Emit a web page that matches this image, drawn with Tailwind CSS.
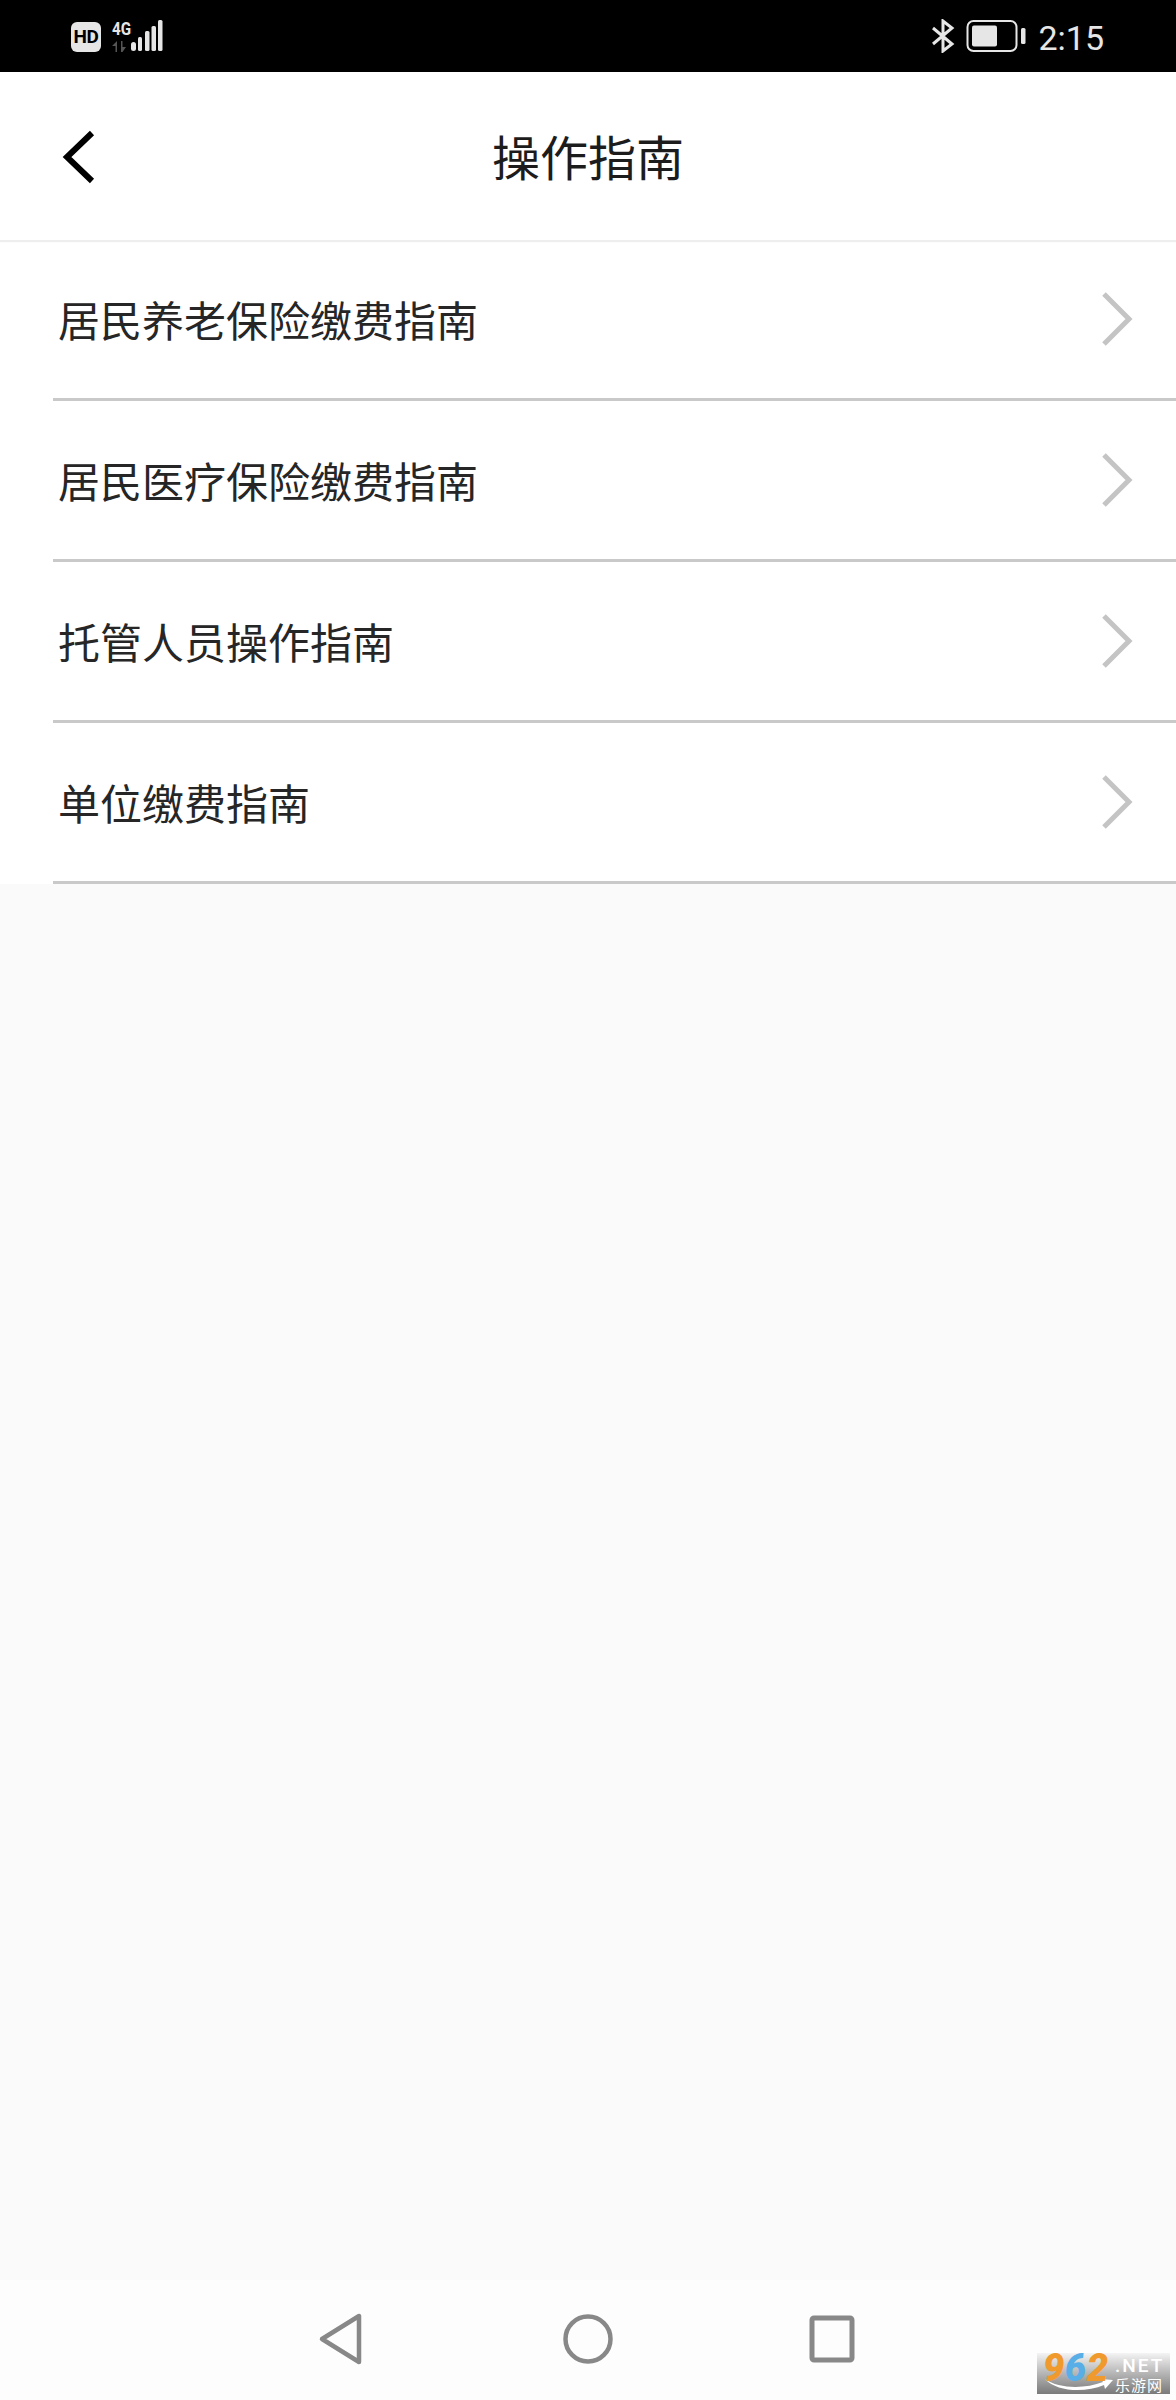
<!DOCTYPE html>
<html lang="zh-CN">
<head>
  <meta charset="UTF-8">
  <meta name="viewport" content="width=device-width, initial-scale=1.0">
  <title>操作指南</title>
  <script src="https://cdn.jsdelivr.net/npm/@tailwindcss/browser@4"></script>
</head>
<body class="bg-[#fafafa] font-['Noto_Sans_CJK_SC',sans-serif] antialiased">
  <div class="relative w-[1176px] h-[2400px] flex flex-col overflow-hidden">

    <!-- status bar -->
    <div class="h-[72px] shrink-0 bg-black flex items-center pl-[71px] pr-[72px] text-[#e6e6e6]">
      <div class="w-[30px] h-[30px] rounded-[6px] bg-[#e6e6e6] flex items-center justify-center text-black font-['Roboto',sans-serif] font-bold text-[19px] leading-none tracking-[-0.5px] mt-[1px]">HD</div>
      <div class="ml-[11px] w-[18px] h-[32px] flex flex-col mt-[-1px]">
        <span class="font-['Roboto',sans-serif] font-bold text-[19px] leading-[17px] origin-left scale-x-[0.8] whitespace-nowrap">4G</span>
        <svg class="mt-[4px]" width="18" height="11" viewBox="0 0 18 11" fill="#555"><path d="M5 0v11H3.500V5H0zM9 0h1.500v6H14L10.500 11H9z"/></svg>
      </div>
      <svg class="ml-[1px] mt-[-1px]" width="32" height="32" viewBox="0 0 32 32" fill="#e6e6e6">
        <rect x="0" y="22" width="5" height="9" rx="2.500"/>
        <rect x="7" y="17" width="4" height="14" rx="1.500"/>
        <rect x="14" y="11" width="4.500" height="20" rx="1.500"/>
        <rect x="20.500" y="6" width="4.500" height="25" rx="1.500"/>
        <rect x="27" y="0" width="4.500" height="31" rx="1.500"/>
      </svg>
      <svg class="ml-auto" width="24" height="34" viewBox="0 0 24 34" fill="none" stroke="#e6e6e6" stroke-width="3">
        <path d="M2 9l19 16-9 7V2l9 7L2 25"/>
      </svg>
      <svg class="ml-[11px]" width="62" height="34" viewBox="0 0 62 34" fill="none">
        <rect x="1.500" y="2" width="49" height="30" rx="6" stroke="#e6e6e6" stroke-width="2"/>
        <rect x="6" y="6.500" width="25" height="21" rx="2" fill="#e6e6e6"/>
        <rect x="55" y="9" width="4.500" height="16" rx="1.500" fill="#e6e6e6"/>
      </svg>
      <span class="ml-[10px] mt-[3px] font-['Roboto',sans-serif] font-normal text-[34px] leading-none">2:15</span>
    </div>

    <!-- header -->
    <div class="relative z-10 h-[168px] shrink-0 bg-white flex items-center justify-center shadow-[0_2px_1px_#eeeeee]">
      <button class="absolute left-[60px] top-[56px]">
        <svg width="38" height="58" viewBox="0 0 38 58" fill="none" stroke="#000" stroke-width="6"><path d="M32 5L7 29l25 24"/></svg>
      </button>
      <h1 class="text-[48px] leading-none font-normal text-[#1c1c1c] mt-[-2px]">操作指南</h1>
    </div>

    <!-- list -->
    <ul class="shrink-0">
      <li class="h-[161px] bg-white pl-[53px]">
        <div class="h-full flex items-center justify-between border-b-[3px] border-[#c9c9c9] pl-[5px] pr-[42px]">
          <span class="text-[42px] leading-none text-[#262626]">居民养老保险缴费指南</span>
          <svg width="34" height="58" viewBox="0 0 34 58" fill="none" stroke="#c4c4c4" stroke-width="5"><path d="M4 4l25 25L4 54"/></svg>
        </div>
      </li>
      <li class="h-[161px] bg-white pl-[53px]">
        <div class="h-full flex items-center justify-between border-b-[3px] border-[#c9c9c9] pl-[5px] pr-[42px]">
          <span class="text-[42px] leading-none text-[#262626]">居民医疗保险缴费指南</span>
          <svg width="34" height="58" viewBox="0 0 34 58" fill="none" stroke="#c4c4c4" stroke-width="5"><path d="M4 4l25 25L4 54"/></svg>
        </div>
      </li>
      <li class="h-[161px] bg-white pl-[53px]">
        <div class="h-full flex items-center justify-between border-b-[3px] border-[#c9c9c9] pl-[5px] pr-[42px]">
          <span class="text-[42px] leading-none text-[#262626]">托管人员操作指南</span>
          <svg width="34" height="58" viewBox="0 0 34 58" fill="none" stroke="#c4c4c4" stroke-width="5"><path d="M4 4l25 25L4 54"/></svg>
        </div>
      </li>
      <li class="h-[161px] bg-white pl-[53px]">
        <div class="h-full flex items-center justify-between border-b-[3px] border-[#c9c9c9] pl-[5px] pr-[42px]">
          <span class="text-[42px] leading-none text-[#262626]">单位缴费指南</span>
          <svg width="34" height="58" viewBox="0 0 34 58" fill="none" stroke="#c4c4c4" stroke-width="5"><path d="M4 4l25 25L4 54"/></svg>
        </div>
      </li>
    </ul>

    <div class="flex-1 bg-[#fafafa]"></div>

    <!-- system nav -->
    <div class="h-[120px] shrink-0 bg-[#fdfdfd] flex items-start justify-center pt-[32px] pr-[3px]">
      <svg width="46" height="54" viewBox="0 0 46 54" fill="none" stroke="#888" stroke-width="4.500" stroke-linejoin="round"><path d="M41 4v46L4 27z"/></svg>
      <svg class="ml-[199px] mr-[196px]" width="50" height="54" viewBox="0 0 50 54" fill="none" stroke="#888" stroke-width="4.500"><circle cx="25" cy="27" r="22.500"/></svg>
      <svg width="46" height="54" viewBox="0 0 46 54" fill="none" stroke="#888" stroke-width="5"><rect x="3" y="6" width="40" height="42" rx="2"/></svg>
    </div>

    <!-- watermark -->
    <div class="absolute left-[1037px] top-[2353px] w-[133px] h-[41px] bg-gradient-to-b from-[#f4f4f4] to-[#7a7a7a]">
      <svg class="absolute left-[8px] top-[24px]" width="70" height="17" viewBox="0 0 70 17" fill="#fff"><path d="M0 2c14 10 40 10 58 3l-2-3 12 1-8 9-1-4C40 16 12 15 0 2z"/></svg>
      <span class="absolute left-[6px] top-0 italic font-['Roboto',sans-serif] font-black text-[38px] leading-[30px] tracking-[0.5px]"><span class="text-[#f09a2e]">9</span><span class="text-[#58aee6]">6</span><span class="text-[#f09a2e]">2</span></span>
      <span class="absolute left-[78px] top-[3px] font-['Roboto',sans-serif] font-medium text-[19px] leading-[19px] tracking-[2px] text-white">.NET</span>
      <span class="absolute left-[78px] top-[24px] text-[15px] leading-[16px] tracking-[1px] text-white">乐游网</span>
    </div>
  </div>
</body>
</html>
